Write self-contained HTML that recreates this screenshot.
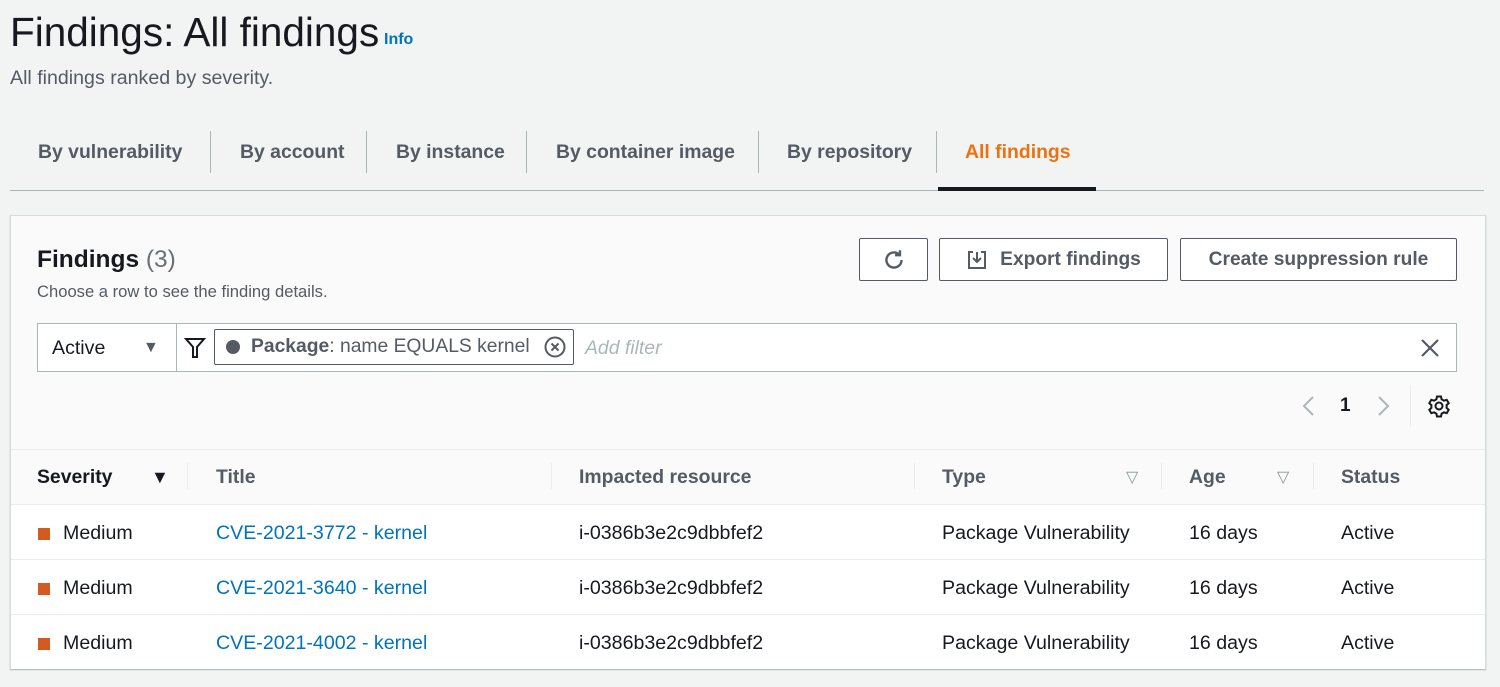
<!DOCTYPE html>
<html><head><meta charset="utf-8"><style>
*{box-sizing:border-box;margin:0;padding:0}
body{width:1500px;height:687px;background:#f2f3f3;font-family:"Liberation Sans",sans-serif;color:#16191f;position:relative;overflow:hidden}
.a{position:absolute;white-space:nowrap}
.tab{position:absolute;top:141px;font-size:19.4px;font-weight:bold;color:#545b64}
.sep{position:absolute;top:131px;width:1px;height:42px;background:#aab7b8}
.btn{position:absolute;top:238px;height:43px;border:1px solid #545b64;border-radius:2px;background:#fff;font-weight:bold;font-size:19.2px;color:#545b64;display:flex;align-items:center;justify-content:center}
.hd{position:absolute;top:466px;font-size:19.4px;font-weight:bold;color:#545b64}
.row{position:absolute;left:11px;width:1474px;height:55px;background:#fff;border-top:1px solid #eaeded;font-size:19.6px}
.row span{position:absolute;top:17px}
.sq{position:absolute;left:27px;top:23px;width:12px;height:12px;background:#d45b1f}
.lk{color:#0073bb}
.hs{position:absolute;top:463px;width:1px;height:26px;background:#eaeded}
</style></head><body>
<div class="a" style="left:10px;top:9px;font-size:40.5px">Findings: All findings</div>
<div class="a" style="left:384px;top:31px;font-size:16px;font-weight:bold;color:#0073bb">Info</div>
<div class="a" style="left:10px;top:67px;font-size:19.6px;color:#545b64">All findings ranked by severity.</div>

<div class="tab" style="left:38px">By vulnerability</div><div class="sep" style="left:210px"></div>
<div class="tab" style="left:240px">By account</div><div class="sep" style="left:366px"></div>
<div class="tab" style="left:396px">By instance</div><div class="sep" style="left:526px"></div>
<div class="tab" style="left:556px">By container image</div><div class="sep" style="left:758px"></div>
<div class="tab" style="left:787px">By repository</div><div class="sep" style="left:936px"></div>
<div class="tab" style="left:965px;color:#ec7211">All findings</div>
<div class="a" style="left:10px;top:190px;width:1474px;height:1px;background:#aab7b8"></div>
<div class="a" style="left:938px;top:187px;width:158px;height:4px;background:#16191f"></div>

<div class="a" style="left:10px;top:215px;width:1476px;height:454px;background:#fafafa;border:1px solid #d5dbdb;box-shadow:0 1px 1px rgba(0,28,36,.3)"></div>
<div class="a" style="left:37px;top:246px;font-size:24.5px;font-weight:bold">Findings <span style="font-weight:normal;color:#687078">(3)</span></div>
<div class="a" style="left:37px;top:282px;font-size:16.6px;color:#545b64">Choose a row to see the finding details.</div>

<div class="btn" style="left:859px;width:69px"><svg width="26" height="26" viewBox="0 0 24 24" fill="none" stroke="#545b64" stroke-width="2.2"><path d="M19 12a7 7 0 1 1-2.2-5.1"/><path d="M17.5 3v4.5H13"/></svg></div>
<div class="btn" style="left:939px;width:229px"><svg width="22" height="22" viewBox="0 0 22 22" fill="none" stroke="#545b64" stroke-width="2" style="margin-right:12px"><path d="M7 3H3v16h16V3h-4"/><path d="M11 3v9M7 9l4 4 4-4"/></svg>Export findings</div>
<div class="btn" style="left:1180px;width:277px">Create suppression rule</div>

<div class="a" style="left:37px;top:323px;width:1420px;height:49px;background:#fff;border:1px solid #aab7b8"></div>
<div class="a" style="left:176px;top:324px;width:1px;height:47px;background:#aab7b8"></div>
<div class="a" style="left:52px;top:337px;font-size:19.6px">Active</div>
<div class="a" style="left:143px;top:339px;font-size:16px;color:#545b64">▼</div>
<svg class="a" style="left:184px;top:336px" width="22" height="24" viewBox="0 0 22 24" fill="none" stroke="#16191f" stroke-width="2"><path d="M2 3h18l-7 8v10h-4V11z"/></svg>
<div class="a" style="left:214px;top:329px;width:360px;height:36px;border:1px solid #545b64;border-radius:2px;background:#fff"></div>
<div class="a" style="left:226px;top:340px;width:14px;height:14px;border-radius:50%;background:#545b64"></div>
<div class="a" style="left:251px;top:336px;font-size:19.3px;color:#545b64"><b>Package</b>: name EQUALS kernel</div>
<svg class="a" style="left:543px;top:335px" width="24" height="24" viewBox="0 0 24 24" fill="none" stroke="#545b64" stroke-width="2"><circle cx="12" cy="12" r="9.5"/><path d="M8.5 8.5l7 7M15.5 8.5l-7 7"/></svg>
<div class="a" style="left:585px;top:337px;font-size:19.4px;font-style:italic;color:#aab7b8">Add filter</div>
<svg class="a" style="left:1420px;top:338px" width="20" height="20" viewBox="0 0 20 20" stroke="#545b64" stroke-width="2.2"><path d="M2 2l16 16M18 2L2 18"/></svg>

<svg class="a" style="left:1300px;top:395px" width="16" height="22" viewBox="0 0 16 22" fill="none" stroke="#aab7b8" stroke-width="2"><path d="M13 2L4 11l9 9"/></svg>
<div class="a" style="left:1340px;top:395px;font-size:19px;font-weight:bold">1</div>
<svg class="a" style="left:1376px;top:395px" width="16" height="22" viewBox="0 0 16 22" fill="none" stroke="#aab7b8" stroke-width="2"><path d="M3 2l9 9-9 9"/></svg>
<div class="a" style="left:1410px;top:385px;width:1px;height:42px;background:#eaeded"></div>
<svg class="a" style="left:1427px;top:394px" width="24" height="24" viewBox="0 0 24 24" fill="none" stroke="#16191f" stroke-width="2"><circle cx="12" cy="12" r="3.5"/><path d="M10 2.5h4l.6 2.8 2.4 1.4 2.7-.9 2 3.4-2.1 1.9v2.8l2.1 1.9-2 3.4-2.7-.9-2.4 1.4-.6 2.8h-4l-.6-2.8-2.4-1.4-2.7.9-2-3.4 2.1-1.9v-2.8L2.3 9.2l2-3.4 2.7.9 2.4-1.4z"/></svg>

<div class="a" style="left:11px;top:449px;width:1474px;height:1px;background:#eaeded"></div>
<div class="hd" style="left:37px;color:#16191f">Severity</div>
<div class="a" style="left:151px;top:467px;font-size:18px">▼</div>
<div class="hs" style="left:187px"></div>
<div class="hd" style="left:216px">Title</div>
<div class="hs" style="left:551px"></div>
<div class="hd" style="left:579px">Impacted resource</div>
<div class="hs" style="left:914px"></div>
<div class="hd" style="left:942px">Type</div>
<div class="a" style="left:1126px;top:467px;font-size:16px;color:#879596">▽</div>
<div class="hs" style="left:1161px"></div>
<div class="hd" style="left:1189px">Age</div>
<div class="a" style="left:1277px;top:467px;font-size:16px;color:#879596">▽</div>
<div class="hs" style="left:1313px"></div>
<div class="hd" style="left:1341px">Status</div>

<div class="row" style="top:504px"><i class="sq"></i><span style="left:52px">Medium</span><span class="lk" style="left:205px">CVE-2021-3772 - kernel</span><span style="left:568px">i-0386b3e2c9dbbfef2</span><span style="left:931px">Package Vulnerability</span><span style="left:1178px">16 days</span><span style="left:1330px">Active</span></div>
<div class="row" style="top:559px"><i class="sq"></i><span style="left:52px">Medium</span><span class="lk" style="left:205px">CVE-2021-3640 - kernel</span><span style="left:568px">i-0386b3e2c9dbbfef2</span><span style="left:931px">Package Vulnerability</span><span style="left:1178px">16 days</span><span style="left:1330px">Active</span></div>
<div class="row" style="top:614px"><i class="sq"></i><span style="left:52px">Medium</span><span class="lk" style="left:205px">CVE-2021-4002 - kernel</span><span style="left:568px">i-0386b3e2c9dbbfef2</span><span style="left:931px">Package Vulnerability</span><span style="left:1178px">16 days</span><span style="left:1330px">Active</span></div>
</body></html>
